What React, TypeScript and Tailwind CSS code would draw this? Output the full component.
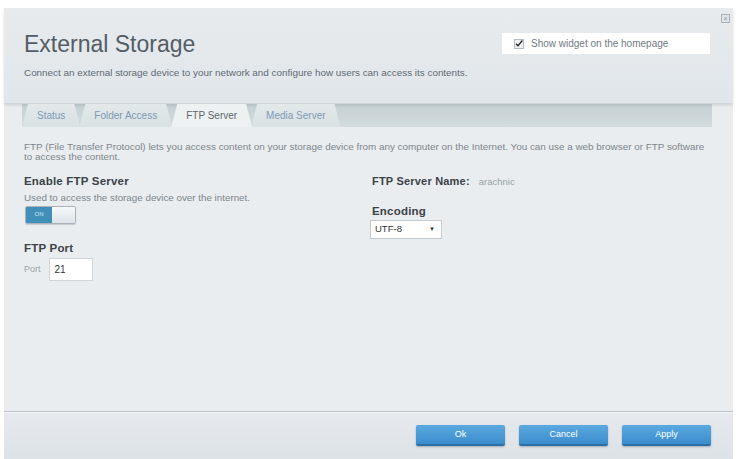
import React from 'react';

const tabs = ['Status', 'Folder Access', 'FTP Server', 'Media Server'];

function Tab({ label, active }: { label: string; active: boolean }) {
  return (
    <div
      className={`relative -mr-[1px] flex h-[23px] items-center px-[15px] text-[10px] [clip-path:polygon(6px_0,calc(100%-6px)_0,100%_100%,0_100%)] ${
        active ? 'z-10 bg-[#eef1f2] text-[#5c666e]' : 'bg-gradient-to-b from-[#e3e9eb] to-[#d9e1e3] text-[#7f98b4]'
      }`}
    >
      {label}
    </div>
  );
}

function BlueButton({ label }: { label: string }) {
  return (
    <button
      type="button"
      className="h-[21px] w-[89px] rounded-[2px] border-b-2 border-[#2a6fa5] bg-gradient-to-b from-[#5aa9e0] to-[#3a8ccc] text-[9px] text-white shadow-[0_1px_2px_rgba(0,0,0,0.25)]"
    >
      {label}
    </button>
  );
}

export default function App() {
  return (
    <div className="h-[459px] w-[737px] bg-white font-['Liberation_Sans',Arial,sans-serif]">
      <div className="h-[8px]" />
      <div className="ml-[4px] flex h-[451px] w-[729px] flex-col bg-[#e9edef]">
        {/* header */}
        <div className="relative h-[95px] bg-gradient-to-b from-[#e7ebee] to-[#e1e6ea] px-[20px] pt-[22px] shadow-[0_2px_3px_rgba(0,0,0,0.12)]">
          <div className="flex items-start justify-between">
            <h1 className="text-[23px] leading-[28px] text-[#535d66]">External Storage</h1>
            <label className="mr-[3px] mt-[3px] flex h-[21px] w-[208px] items-center gap-[7px] bg-white pl-[12px] text-[10px] text-[#707a82]">
              <span className="flex h-[10px] w-[10px] items-center justify-center border border-[#b5bcc2] bg-[#eef0f2]">
                <svg viewBox="0 0 12 12" className="h-[11px] w-[11px]">
                  <path d="M1.5 6.5 L4.5 9.5 L11 1.5" fill="none" stroke="#222" strokeWidth="2" />
                </svg>
              </span>
              Show widget on the homepage
            </label>
          </div>
          <p className="mt-[8px] text-[9.9px] text-[#5f6a73]">
            Connect an external storage device to your network and configure how users can access its contents.
          </p>
          <div className="absolute right-[3px] top-[6px] flex h-[9px] w-[9px] items-center justify-center border border-[#aab2b8] bg-[#dfe4e8] text-[7px] leading-none text-[#8a939a]">
            ×
          </div>
        </div>

        {/* tabs */}
        <div className="ml-[18px] mr-[21px] mt-[1px] flex h-[23px] bg-gradient-to-b from-[#c4d0d3] to-[#d3dcde]">
          {tabs.map((t) => (
            <Tab key={t} label={t} active={t === 'FTP Server'} />
          ))}
        </div>

        {/* content */}
        <div className="flex-1 pl-[20px] pr-[14px] pt-[15px]">
          <p className="mr-[8px] text-[9.9px] leading-[10px] text-[#7d868d]">
            FTP (File Transfer Protocol) lets you access content on your storage device from any computer on the Internet. You can use a web browser or FTP software to access the content.
          </p>
          <div className="mt-[11px] flex">
            <div className="w-[348px]">
              <h2 className="text-[11.5px] font-bold tracking-[0.2px] text-[#3b4248]">Enable FTP Server</h2>
              <p className="mt-[1px] text-[9.8px] text-[#7d868d]">Used to access the storage device over the internet.</p>
              <div className="ml-[1px] flex h-[18px] w-[51px] overflow-hidden rounded-[2px] border border-[#a9b3b9] shadow-[0_1px_1px_rgba(0,0,0,0.15)]">
                <div className="flex w-[26px] items-center justify-center bg-[#3f8fb8] text-[6px] text-[#d7ebf5]">ON</div>
                <div className="flex-1 bg-gradient-to-b from-[#f7f9fa] to-[#dde3e6]" />
              </div>
              <h2 className="mt-[16px] text-[11.5px] font-bold tracking-[0.2px] text-[#3b4248]">FTP Port</h2>
              <div className="mt-[1px] flex items-center gap-[8px]">
                <span className="text-[9px] text-[#9aa2a8]">Port</span>
                <div className="flex h-[23px] w-[44px] items-center border border-[#cfd5d9] bg-white pl-[5px] text-[10px] text-[#333]">
                  21
                </div>
              </div>
            </div>
            <div>
              <div className="flex items-baseline gap-[9px]">
                <h2 className="text-[11px] font-bold tracking-[0.2px] text-[#3b4248]">FTP Server Name:</h2>
                <span className="text-[9.5px] text-[#9aa2a8]">arachnic</span>
              </div>
              <h2 className="mt-[13px] text-[11.5px] font-bold tracking-[0.2px] text-[#3b4248]">Encoding</h2>
              <div className="-ml-[2px] flex h-[19px] w-[72px] items-center justify-between border border-[#c5ccd1] bg-white pl-[4px] pr-[6px] text-[9.5px] text-[#333]">
                UTF-8
                <span className="text-[6px]">▼</span>
              </div>
            </div>
          </div>
        </div>

        {/* footer */}
        <div className="flex h-[48px] items-center justify-end gap-[14px] border-t border-[#b9c4c8] bg-gradient-to-b from-[#e6eaee] to-[#dde2e6] pr-[22px] shadow-[inset_0_1px_0_#f4f6f7]">
          <BlueButton label="Ok" />
          <BlueButton label="Cancel" />
          <BlueButton label="Apply" />
        </div>
      </div>
    </div>
  );
}
